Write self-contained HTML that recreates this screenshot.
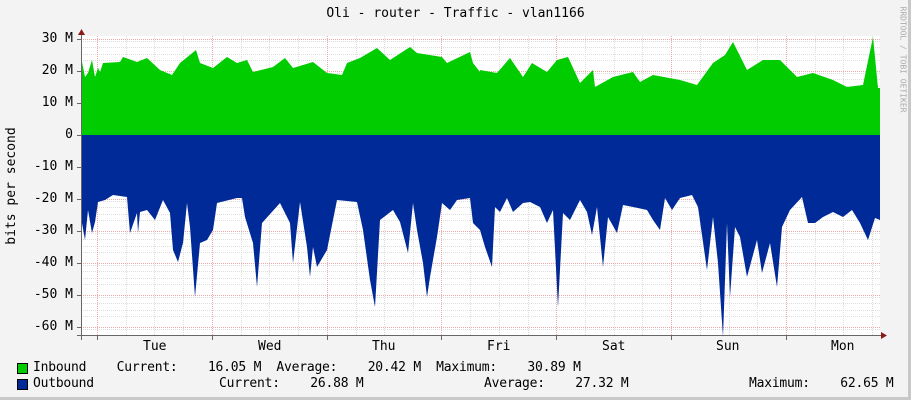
<!DOCTYPE html>
<html><head><meta charset="utf-8"><style>
html,body{margin:0;padding:0}
body{width:911px;height:400px;position:relative;background:#f3f3f3;overflow:hidden;font-family:"DejaVu Sans Mono","Liberation Mono",monospace;font-size:13px;color:#000}
.t{position:absolute;white-space:pre;line-height:14px}
.lg{letter-spacing:-0.22px}
.yl{position:absolute;right:838px;white-space:pre;line-height:14px}
.sw{position:absolute;width:11px;height:11px;border:1px solid #000;box-sizing:border-box}
</style></head><body>
<div style="position:absolute;right:0;top:0;width:3px;height:400px;background:#c8c8c8"></div>
<div style="position:absolute;left:0;bottom:0;width:911px;height:3px;background:#c8c8c8"></div>
<div class="t" style="left:0;width:911px;text-align:center;top:7px">Oli - router - Traffic - vlan1166</div>
<div class="t" style="left:-53px;top:179px;width:130px;text-align:center;transform:rotate(-90deg)">bits per second</div>
<div class="t" style="left:850px;top:55px;width:106px;text-align:center;transform:rotate(90deg);font-size:8px;color:#aaa;line-height:9px">RRDTOOL / TOBI OETIKER</div>
<div class="yl" style="top:32px">30 M</div>
<div class="yl" style="top:64px">20 M</div>
<div class="yl" style="top:96px">10 M</div>
<div class="yl" style="top:128px">0</div>
<div class="yl" style="top:160px">-10 M</div>
<div class="yl" style="top:192px">-20 M</div>
<div class="yl" style="top:224px">-30 M</div>
<div class="yl" style="top:256px">-40 M</div>
<div class="yl" style="top:288px">-50 M</div>
<div class="yl" style="top:320px">-60 M</div>
<svg style="position:absolute;left:0;top:0" width="911" height="400">
<rect x="81" y="36" width="799" height="300" fill="#fff"/>
<g stroke-width="1" stroke-dasharray="1,1" shape-rendering="crispEdges">
<g stroke="#ddd">
<path d="M81 41.5H880M81 47.5H880M81 54.5H880M81 60.5H880M81 73.5H880M81 79.5H880M81 86.5H880M81 92.5H880M81 105.5H880M81 111.5H880M81 118.5H880M81 124.5H880M81 137.5H880M81 143.5H880M81 150.5H880M81 156.5H880M81 169.5H880M81 175.5H880M81 182.5H880M81 188.5H880M81 201.5H880M81 207.5H880M81 214.5H880M81 220.5H880M81 233.5H880M81 239.5H880M81 246.5H880M81 252.5H880M81 265.5H880M81 271.5H880M81 278.5H880M81 284.5H880M81 297.5H880M81 303.5H880M81 310.5H880M81 316.5H880M81 329.5H880"/>
<path d="M126.5 36V336M154.5 36V336M183.5 36V336M241.5 36V336M269.5 36V336M298.5 36V336M356.5 36V336M384.5 36V336M413.5 36V336M470.5 36V336M499.5 36V336M528.5 36V336M585.5 36V336M614.5 36V336M642.5 36V336M700.5 36V336M729.5 36V336M757.5 36V336M815.5 36V336M843.5 36V336M872.5 36V336"/>
</g>
<g stroke="#f0a8a8">
<path d="M81 39.5H880M81 71.5H880M81 103.5H880M81 167.5H880M81 199.5H880M81 231.5H880M81 263.5H880M81 295.5H880M81 327.5H880"/>
<path d="M97.5 36V336M212.5 36V336M327.5 36V336M441.5 36V336M556.5 36V336M671.5 36V336M786.5 36V336"/>
</g>
</g>
<path fill="#00cc00" d="M81 135V62L82 62L85 77L88 73L92 60L95 77L98 68L100 72L103 63L120 62L123 57L137 62L147 58L160 70L172 75L180 63L196 50L200 63L213 68L227 57L237 63L247 60L253 72L273 67L285 58L293 68L313 62L327 73L342 75L347 63L360 58L377 48L390 60L410 47L417 53L442 57L447 63L470 52L473 63L480 72L480 70L497 73L510 58L523 77L532 63L547 72L557 60L568 57L580 83L593 70L595 87L613 77L633 72L640 82L653 75L680 80L697 85L713 63L725 55L733 42L747 70L763 60L780 60L797 77L813 73L833 80L847 87L863 85L873 37L878 88L880 88V135Z"/>
<path fill="#002a97" d="M81 135V223L82 223L85 240L88 210L92 233L95 222L98 202L105 200L113 195L127 197L130 233L137 213L138 233L140 212L147 210L155 220L163 200L170 213L173 250L178 262L183 243L187 203L190 227L195 297L200 243L207 240L213 230L217 203L237 198L242 198L245 217L253 243L257 287L262 223L280 203L290 223L293 263L300 202L307 247L310 277L313 247L317 267L327 250L337 200L357 202L363 230L370 280L375 307L380 220L393 210L400 222L408 253L413 203L417 230L423 263L427 297L430 277L437 237L442 203L450 210L457 200L470 198L473 223L480 230L485 247L492 267L495 207L500 212L507 198L513 212L523 203L530 202L540 207L547 223L553 210L558 307L563 213L570 220L580 200L587 212L592 235L597 207L603 267L608 217L617 233L623 205L633 207L647 210L653 220L660 230L665 198L672 210L680 198L692 195L698 207L707 270L713 217L718 263L723 337L727 223L730 297L735 227L740 237L747 277L757 240L762 273L770 243L777 287L782 227L790 210L802 197L808 223L815 223L823 217L833 212L843 217L852 210L860 223L868 240L875 218L880 220V135Z"/>
<g stroke="#666" stroke-width="1" shape-rendering="crispEdges">
<path d="M81.5 32V340M77 335.5H884"/>
<path d="M77 39.5H81M77 71.5H81M77 103.5H81M77 135.5H81M77 167.5H81M77 199.5H81M77 231.5H81M77 263.5H81M77 295.5H81M77 327.5H81"/>
<path d="M97.5 335V340M212.5 335V340M327.5 335V340M441.5 335V340M556.5 335V340M671.5 335V340M786.5 335V340"/>
</g>
<path fill="#8b1a1a" d="M78 35L81.5 29L85 35Z"/>
<path fill="#8b1a1a" d="M881 332L887 335.5L881 339Z"/>
</svg>
<div class="t" style="left:143px;top:340px">Tue</div>
<div class="t" style="left:258px;top:340px">Wed</div>
<div class="t" style="left:372px;top:340px">Thu</div>
<div class="t" style="left:487px;top:340px">Fri</div>
<div class="t" style="left:602px;top:340px">Sat</div>
<div class="t" style="left:716px;top:340px">Sun</div>
<div class="t" style="left:831px;top:340px">Mon</div>
<div class="sw" style="left:17px;top:363px;background:#00cc00"></div>
<div class="sw" style="left:17px;top:379px;background:#002a97"></div>
<div class="t lg" style="left:33px;top:361px">Inbound    Current:    16.05 M  Average:    20.42 M  Maximum:    30.89 M</div>
<div class="t lg" style="left:33px;top:377px">Outbound</div>
<div class="t lg" style="left:219px;top:377px">Current:    26.88 M</div>
<div class="t lg" style="left:484px;top:377px">Average:    27.32 M</div>
<div class="t lg" style="left:749px;top:377px">Maximum:    62.65 M</div>
</body></html>
